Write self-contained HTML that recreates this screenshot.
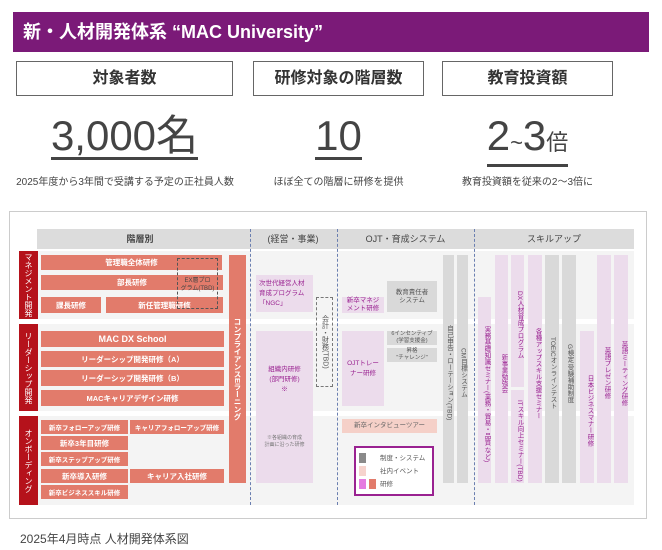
<!DOCTYPE html>
<html><head><meta charset="utf-8"><style>
*{margin:0;padding:0;box-sizing:border-box}
body{width:662px;height:550px;background:#fff;position:relative;font-family:"Liberation Sans","Noto Sans CJK JP",sans-serif;color:#333;overflow:hidden}
.a{position:absolute}
.hd{left:13px;top:12px;width:636px;height:40px;background:#7b1a78;color:#fff;font-size:18px;font-weight:bold;line-height:40px;padding-left:10px}
.bx{top:61px;height:35px;border:1px solid #666;font-size:16px;font-weight:bold;text-align:center;line-height:33px;color:#333}
.big{font-size:42px;color:#444;text-align:center;line-height:44px;top:114px}
.big span{border-bottom:3px solid #444;display:inline-block;line-height:40px;padding-bottom:1px}
.cap{top:173px;font-size:10px;color:#444;text-align:center;white-space:nowrap}
.s{position:absolute;background:#e27b6b;color:#fff;font-size:7.5px;font-weight:bold;text-align:center;display:flex;align-items:center;justify-content:center;white-space:nowrap;overflow:hidden}
.lab{position:absolute;background:#b5121b;color:#fff;font-size:8px;writing-mode:vertical-rl;display:flex;align-items:center;justify-content:center;left:19px;width:19px}
.p{position:absolute;background:#ecdcec;color:#9a2291;font-size:7px;text-align:center;display:flex;align-items:center;justify-content:center;line-height:10px;white-space:nowrap}
.v{writing-mode:vertical-rl;align-items:flex-start;justify-content:center;padding-top:8px;font-size:6.5px}
.g{position:absolute;background:#d9d9d9;color:#555;font-size:6.5px;text-align:center;display:flex;align-items:center;justify-content:center;line-height:8px;white-space:nowrap}
.row{position:absolute;left:37px;width:597px;background:#f4f4f4}
</style></head><body>
<div class="a hd">新・人材開発体系 “MAC University”</div>
<div class="a bx" style="left:16px;width:217px">対象者数</div>
<div class="a bx" style="left:253px;width:171px">研修対象の階層数</div>
<div class="a bx" style="left:442px;width:171px">教育投資額</div>
<div class="a big" style="left:16px;width:217px"><span>3,000名</span></div>
<div class="a big" style="left:253px;width:171px"><span>10</span></div>
<div class="a big" style="left:442px;width:171px"><span>2<small style="font-size:22px">~</small>3<small style="font-size:22px">倍</small></span></div>
<div class="a cap" style="left:10px;width:230px">2025年度から3年間で受講する予定の正社員人数</div>
<div class="a cap" style="left:253px;width:171px">ほぼ全ての階層に研修を提供</div>
<div class="a cap" style="left:430px;width:195px">教育投資額を従来の2～3倍に</div>

<div class="a" style="left:9px;top:211px;width:638px;height:308px;border:1px solid #ccc"></div>
<div class="a" style="left:37px;top:229px;width:597px;height:20px;background:#dcdcdc"></div>
<div class="a" style="left:37px;top:229px;width:206px;font-size:9px;font-weight:bold;color:#444;line-height:20px;text-align:center">階層別</div>
<div class="a" style="left:250px;top:229px;width:86px;font-size:9px;color:#444;line-height:20px;text-align:center">(経営・事業)</div>
<div class="a" style="left:337px;top:229px;width:137px;font-size:9px;color:#444;line-height:20px;text-align:center">OJT・育成システム</div>
<div class="a" style="left:474px;top:229px;width:160px;font-size:9px;color:#444;line-height:20px;text-align:center">スキルアップ</div>
<div class="row" style="top:251px;height:68px"></div>
<div class="row" style="top:324px;height:87px"></div>
<div class="row" style="top:416px;height:89px"></div>
<div class="a" style="left:250px;top:229px;height:276px;border-left:1px dashed #6b7fb0"></div>
<div class="a" style="left:337px;top:229px;height:276px;border-left:1px dashed #6b7fb0"></div>
<div class="a" style="left:474px;top:229px;height:276px;border-left:1px dashed #6b7fb0"></div>

<div class="lab" style="top:251px;height:68px">マネジメント開発</div>
<div class="lab" style="top:324px;height:87px">リーダーシップ開発</div>
<div class="lab" style="top:416px;height:89px">オンボーディング</div>

<div class="s" style="left:41px;top:255px;width:181px;height:15px">管理職全体研修</div>
<div class="s" style="left:41px;top:275px;width:182px;height:15px">部長研修</div>
<div class="s" style="left:41px;top:297px;width:60px;height:16px">課長研修</div>
<div class="s" style="left:106px;top:297px;width:117px;height:16px">新任管理職研修</div>
<div class="a" style="left:177px;top:258px;width:41px;height:51px;border:1px dashed #555;font-size:6px;color:#444;text-align:center;padding-top:18px;line-height:8px">EX層プロ<br>グラム(TBD)</div>
<div class="s" style="left:41px;top:331px;width:183px;height:16px;font-size:9px">MAC DX School</div>
<div class="s" style="left:41px;top:351px;width:183px;height:16px">リーダーシップ開発研修（A）</div>
<div class="s" style="left:41px;top:370px;width:183px;height:16px">リーダーシップ開発研修（B）</div>
<div class="s" style="left:41px;top:390px;width:183px;height:16px">MACキャリアデザイン研修</div>
<div class="s" style="left:41px;top:420px;width:87px;height:14px;font-size:6.5px">新卒フォローアップ研修</div>
<div class="s" style="left:130px;top:420px;width:94px;height:14px;font-size:6.5px">キャリアフォローアップ研修</div>
<div class="s" style="left:41px;top:436px;width:87px;height:14px">新卒3年目研修</div>
<div class="s" style="left:41px;top:452px;width:87px;height:14px;font-size:6.5px">新卒ステップアップ研修</div>
<div class="s" style="left:41px;top:469px;width:87px;height:14px">新卒導入研修</div>
<div class="s" style="left:130px;top:469px;width:94px;height:14px">キャリア入社研修</div>
<div class="s" style="left:41px;top:485px;width:87px;height:14px;font-size:6.5px">新卒ビジネススキル研修</div>
<div class="s" style="left:229px;top:255px;width:17px;height:228px;writing-mode:vertical-rl">コンプライアンスEラーニング</div>

<div class="p" style="left:256px;top:275px;width:57px;height:37px;justify-content:flex-start;text-align:left;padding-left:3px;font-size:6.5px">次世代経営人材<br>育成プログラム<br>「NGC」</div>
<div class="p" style="left:256px;top:331px;width:57px;height:152px;flex-direction:column;font-size:6.5px">組織内研修<br>(部門研修)<br>※<span style="font-size:5px;line-height:7px;margin-top:40px;color:#777">※各組織の育成<br>計画に沿った研修</span></div>
<div class="a" style="left:316px;top:297px;width:17px;height:90px;border:1px dashed #777;writing-mode:vertical-rl;font-size:7px;color:#555;display:flex;align-items:center;justify-content:center">会計・財務(TBD)</div>

<div class="p" style="left:342px;top:297px;width:42px;height:16px;line-height:8px;font-size:6.5px">新卒マネジ<br>メント研修</div>
<div class="g" style="left:387px;top:281px;width:50px;height:31px">教育責任者<br>システム</div>
<div class="p" style="left:342px;top:331px;width:42px;height:75px;font-size:6.5px">OJTトレー<br>ナー研修</div>
<div class="g" style="left:387px;top:331px;width:50px;height:14px;font-size:5.5px;line-height:7px">6インセンティブ<br>(学習支援金)</div>
<div class="g" style="left:387px;top:348px;width:50px;height:14px;font-size:5.5px;line-height:7px">昇格<br>"チャレンジ"</div>
<div class="a" style="left:342px;top:419px;width:95px;height:14px;background:#f5d0c8;color:#666;font-size:6.5px;text-align:center;line-height:14px">新卒インタビューツアー</div>
<div class="a" style="left:354px;top:446px;width:80px;height:50px;border:2px solid #9a2291;background:#fff"></div>
<div class="a" style="left:359px;top:453px;width:7px;height:10px;background:#8a8a8a"></div>
<div class="a" style="left:359px;top:466px;width:7px;height:10px;background:#f6d3cd"></div>
<div class="a" style="left:359px;top:479px;width:7px;height:10px;background:#e57be0"></div>
<div class="a" style="left:369px;top:479px;width:7px;height:10px;background:#e27b6b"></div>
<div class="a" style="left:380px;top:452px;font-size:6.5px;color:#555;line-height:13px">制度・システム<br>社内イベント<br>研修</div>

<div class="g v" style="left:443px;top:255px;width:11px;height:228px">自己申告・ローテーション(TBD)</div>
<div class="g v" style="left:457px;top:255px;width:11px;height:228px">CM目標システム</div>
<div class="p v" style="left:478px;top:297px;width:13px;height:186px">実務基礎知識セミナー(業務・貿易・品質 など)</div>
<div class="p v" style="left:495px;top:255px;width:13px;height:228px">新事業勉強会</div>
<div class="p v" style="left:511px;top:255px;width:13px;height:132px">DX人材育成プログラム</div>
<div class="p v" style="left:511px;top:390px;width:13px;height:93px">ITスキル向上セミナー(TBD)</div>
<div class="p v" style="left:528px;top:255px;width:14px;height:228px">各種アップスキル支援セミナー</div>
<div class="g v" style="left:545px;top:255px;width:14px;height:228px">TOEICオンラインテスト</div>
<div class="g v" style="left:562px;top:255px;width:14px;height:228px">G検定 受験補助制度</div>
<div class="p v" style="left:580px;top:331px;width:14px;height:152px">日本ビジネスマナー研修</div>
<div class="p v" style="left:597px;top:255px;width:14px;height:228px">英語プレゼン研修</div>
<div class="p v" style="left:614px;top:255px;width:14px;height:228px">英語ミーティング研修</div>

<div class="a" style="left:20px;top:530px;font-size:12px;color:#444">2025年4月時点 人材開発体系図</div>
</body></html>
